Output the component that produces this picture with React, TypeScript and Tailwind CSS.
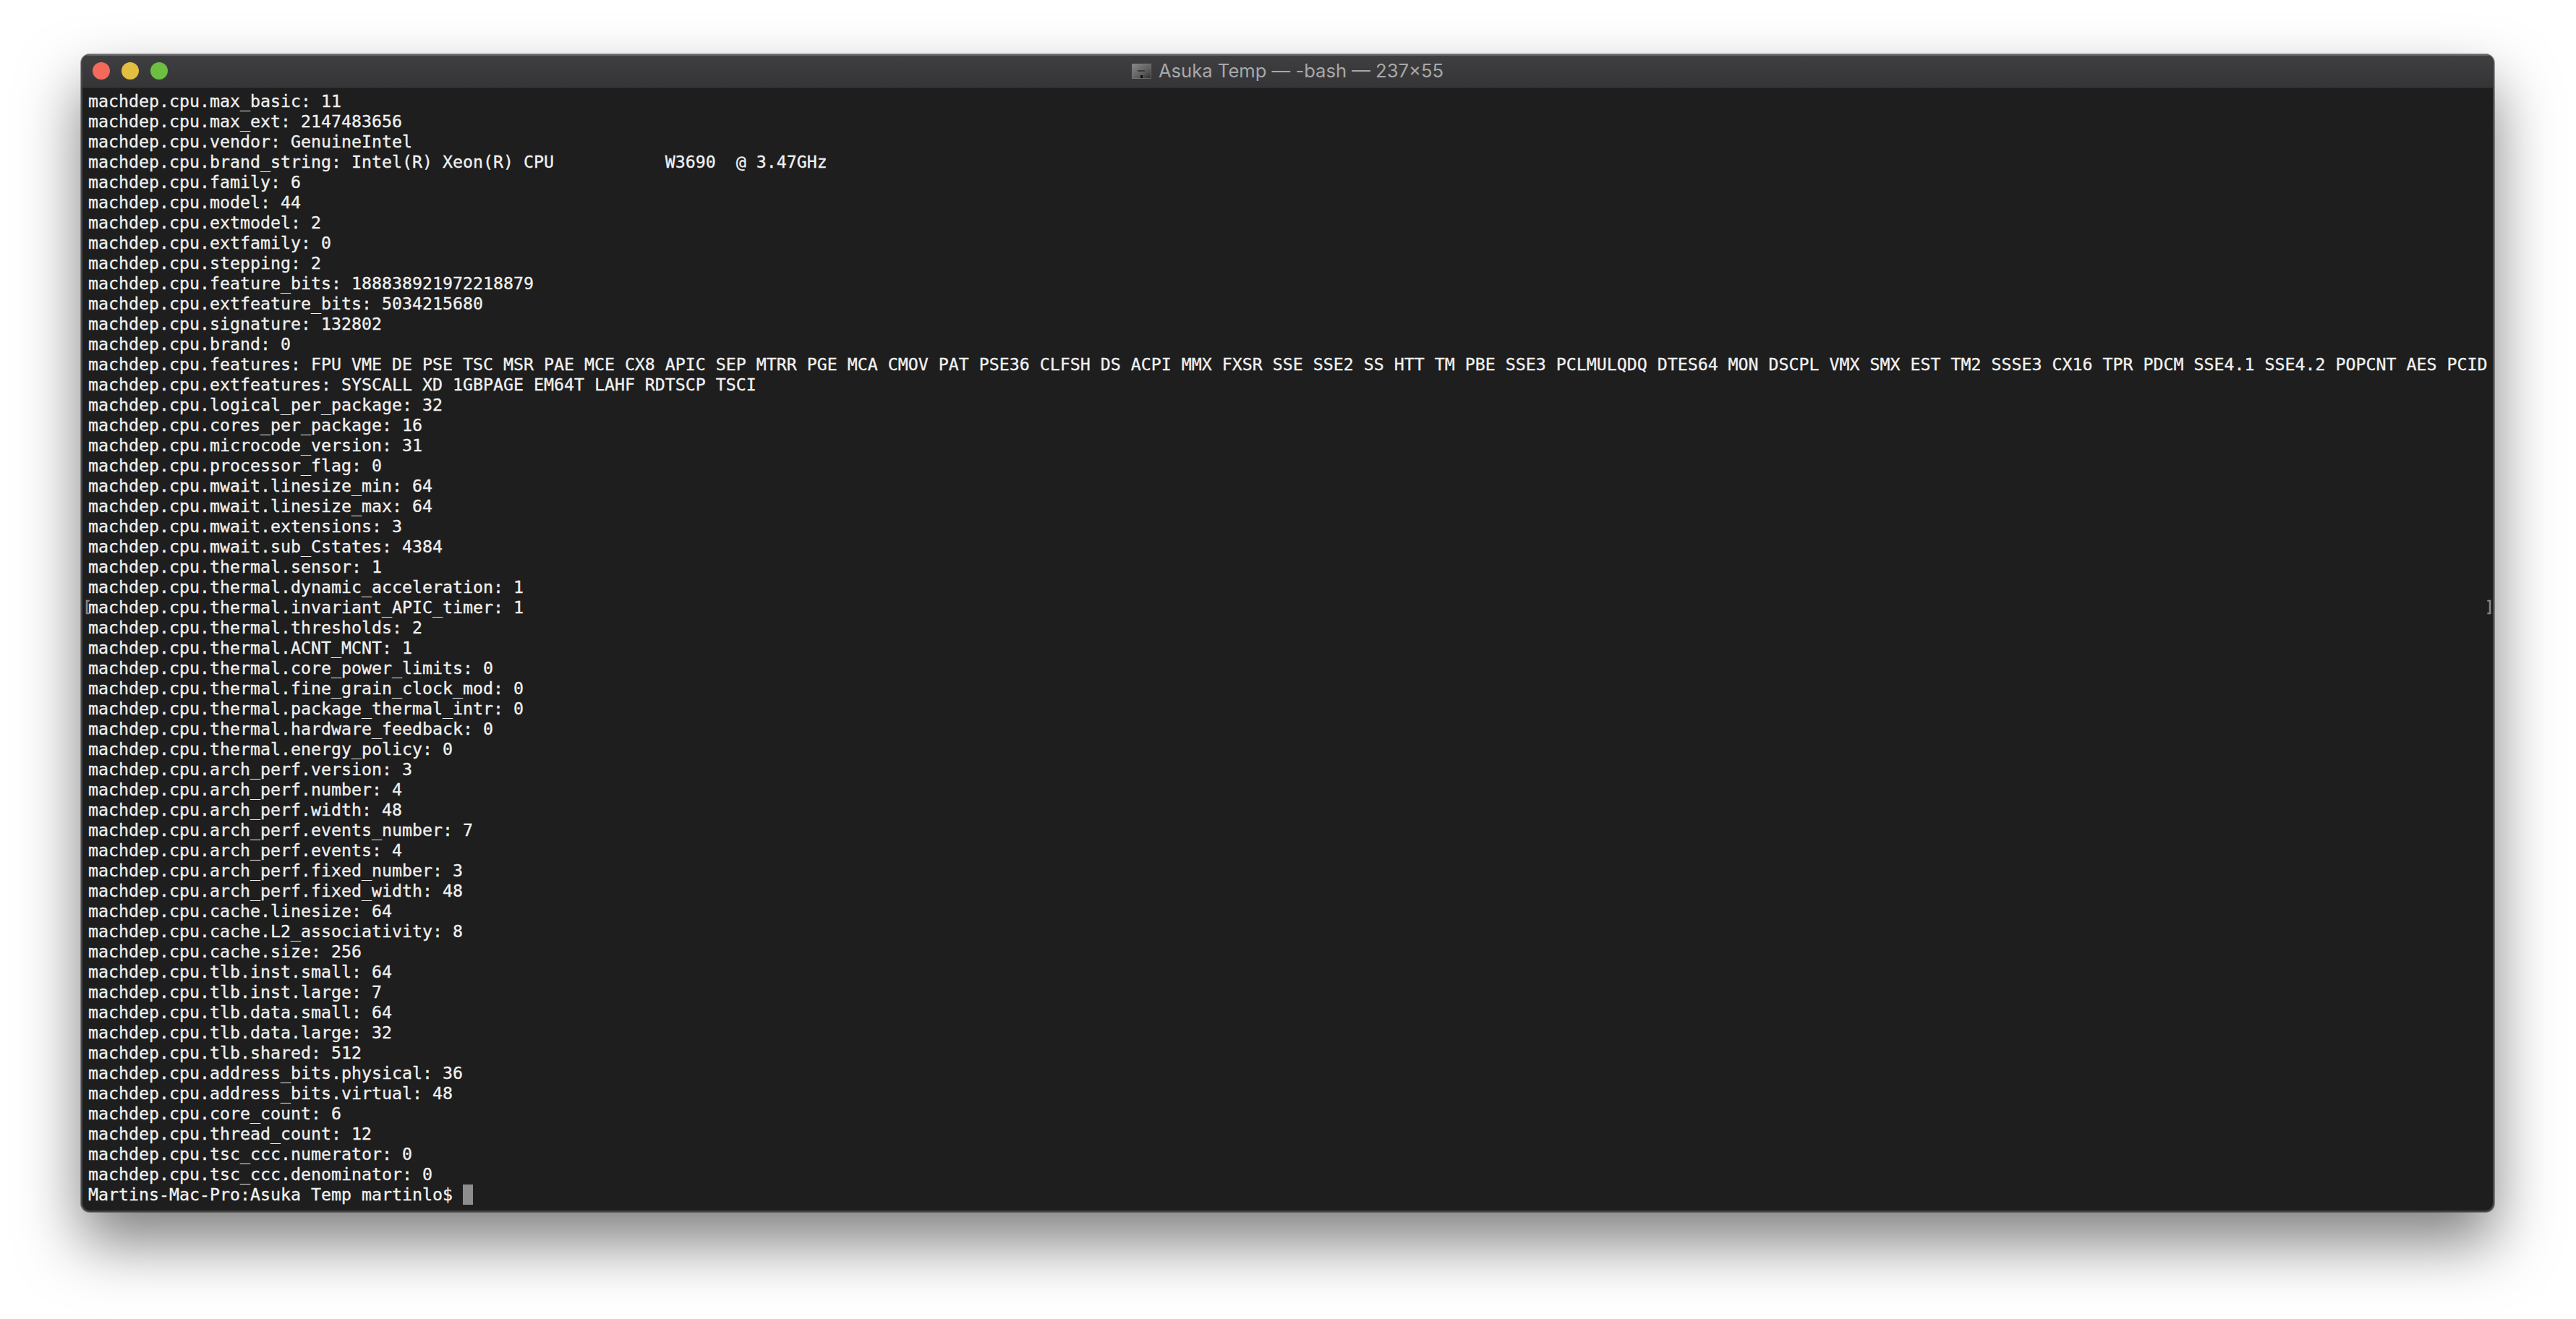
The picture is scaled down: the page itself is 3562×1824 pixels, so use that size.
const lines: string[] = [
  "machdep.cpu.max_basic: 11",
  "machdep.cpu.max_ext: 2147483656",
  "machdep.cpu.vendor: GenuineIntel",
  "machdep.cpu.brand_string: Intel(R) Xeon(R) CPU           W3690  @ 3.47GHz",
  "machdep.cpu.family: 6",
  "machdep.cpu.model: 44",
  "machdep.cpu.extmodel: 2",
  "machdep.cpu.extfamily: 0",
  "machdep.cpu.stepping: 2",
  "machdep.cpu.feature_bits: 188838921972218879",
  "machdep.cpu.extfeature_bits: 5034215680",
  "machdep.cpu.signature: 132802",
  "machdep.cpu.brand: 0",
  "machdep.cpu.features: FPU VME DE PSE TSC MSR PAE MCE CX8 APIC SEP MTRR PGE MCA CMOV PAT PSE36 CLFSH DS ACPI MMX FXSR SSE SSE2 SS HTT TM PBE SSE3 PCLMULQDQ DTES64 MON DSCPL VMX SMX EST TM2 SSSE3 CX16 TPR PDCM SSE4.1 SSE4.2 POPCNT AES PCID",
  "machdep.cpu.extfeatures: SYSCALL XD 1GBPAGE EM64T LAHF RDTSCP TSCI",
  "machdep.cpu.logical_per_package: 32",
  "machdep.cpu.cores_per_package: 16",
  "machdep.cpu.microcode_version: 31",
  "machdep.cpu.processor_flag: 0",
  "machdep.cpu.mwait.linesize_min: 64",
  "machdep.cpu.mwait.linesize_max: 64",
  "machdep.cpu.mwait.extensions: 3",
  "machdep.cpu.mwait.sub_Cstates: 4384",
  "machdep.cpu.thermal.sensor: 1",
  "machdep.cpu.thermal.dynamic_acceleration: 1",
  "machdep.cpu.thermal.invariant_APIC_timer: 1",
  "machdep.cpu.thermal.thresholds: 2",
  "machdep.cpu.thermal.ACNT_MCNT: 1",
  "machdep.cpu.thermal.core_power_limits: 0",
  "machdep.cpu.thermal.fine_grain_clock_mod: 0",
  "machdep.cpu.thermal.package_thermal_intr: 0",
  "machdep.cpu.thermal.hardware_feedback: 0",
  "machdep.cpu.thermal.energy_policy: 0",
  "machdep.cpu.arch_perf.version: 3",
  "machdep.cpu.arch_perf.number: 4",
  "machdep.cpu.arch_perf.width: 48",
  "machdep.cpu.arch_perf.events_number: 7",
  "machdep.cpu.arch_perf.events: 4",
  "machdep.cpu.arch_perf.fixed_number: 3",
  "machdep.cpu.arch_perf.fixed_width: 48",
  "machdep.cpu.cache.linesize: 64",
  "machdep.cpu.cache.L2_associativity: 8",
  "machdep.cpu.cache.size: 256",
  "machdep.cpu.tlb.inst.small: 64",
  "machdep.cpu.tlb.inst.large: 7",
  "machdep.cpu.tlb.data.small: 64",
  "machdep.cpu.tlb.data.large: 32",
  "machdep.cpu.tlb.shared: 512",
  "machdep.cpu.address_bits.physical: 36",
  "machdep.cpu.address_bits.virtual: 48",
  "machdep.cpu.core_count: 6",
  "machdep.cpu.thread_count: 12",
  "machdep.cpu.tsc_ccc.numerator: 0",
  "machdep.cpu.tsc_ccc.denominator: 0",
];

function Line({ text, marked }: { text: string; marked?: boolean }) {
  return (
    <div className="relative h-[28px] whitespace-pre leading-[28px]">
      {marked && <span className="absolute left-[-8px] top-[-1px] text-[22px] text-[#8a8a8a] tracking-[-4px] [-webkit-text-stroke:0.4px_#8a8a8a]">[</span>}
      {text}
      {marked && <span className="absolute right-[2px] top-[-1px] text-[22px] text-[#8a8a8a] tracking-[-4px] [-webkit-text-stroke:0.4px_#8a8a8a]">]</span>}
    </div>
  );
}

export default function App() {
  return (
    <div className="h-[1824px] w-[3562px] overflow-hidden bg-white pl-[112px] pt-[75px]">
      <div className="flex h-[1601px] w-[3337px] flex-col overflow-hidden rounded-[12px] border-2 border-t-0 border-[#4a4a4c] border-b-[#444446] bg-[#1e1e1e] shadow-[0_42px_84px_rgba(0,0,0,0.5),0_0_0_1px_rgba(0,0,0,0.35)]">
        <div className="relative flex h-[47px] shrink-0 items-center justify-center border-t-2 border-b-2 border-t-[#68686a] border-b-[#303032] bg-gradient-to-b from-[#3f3f41] to-[#353537]">
          <div className="absolute left-[14px] top-[9px] flex gap-[16px]">
            <div className="h-[24px] w-[24px] rounded-full bg-[#f3695a]" />
            <div className="h-[24px] w-[24px] rounded-full bg-[#e2bf40]" />
            <div className="h-[24px] w-[24px] rounded-full bg-[#6cbf40]" />
          </div>
          <div className="flex items-center gap-[10px] font-['Inter',sans-serif] text-[25.6px] text-[#a8a8a8]">
            <svg width="27" height="21" viewBox="0 0 27 21" className="shrink-0">
              <defs>
                <linearGradient id="disk" x1="0" y1="0" x2="1" y2="1">
                  <stop offset="0" stopColor="#8a8a8a" />
                  <stop offset="0.6" stopColor="#5e5e5e" />
                  <stop offset="1" stopColor="#2e2e2e" />
                </linearGradient>
              </defs>
              <rect x="0.5" y="0.5" width="26" height="20" fill="url(#disk)" stroke="#8a8a8a" strokeWidth="0.6" />
              <rect x="8" y="9" width="10" height="2" fill="#3a3a3a" />
              <rect x="12" y="16" width="3" height="4" fill="#111111" />
            </svg>
            <span>Asuka Temp — -bash — 237×55</span>
          </div>
        </div>
        <div className="pl-[8px] pt-[4px] font-['DejaVu_Sans_Mono',monospace] text-[23.25px] text-[#f1f1f1] [-webkit-text-stroke:0.3px_#f1f1f1]">
          {lines.map((t, i) => (
            <Line key={i} text={t} marked={i === 25} />
          ))}
          <div className="flex h-[28px] items-center whitespace-pre leading-[28px]">
            <span>Martins-Mac-Pro:Asuka Temp martinlo$ </span>
            <span className="h-[28px] w-[14px] bg-[#8e8e8e]" />
          </div>
        </div>
      </div>
    </div>
  );
}
